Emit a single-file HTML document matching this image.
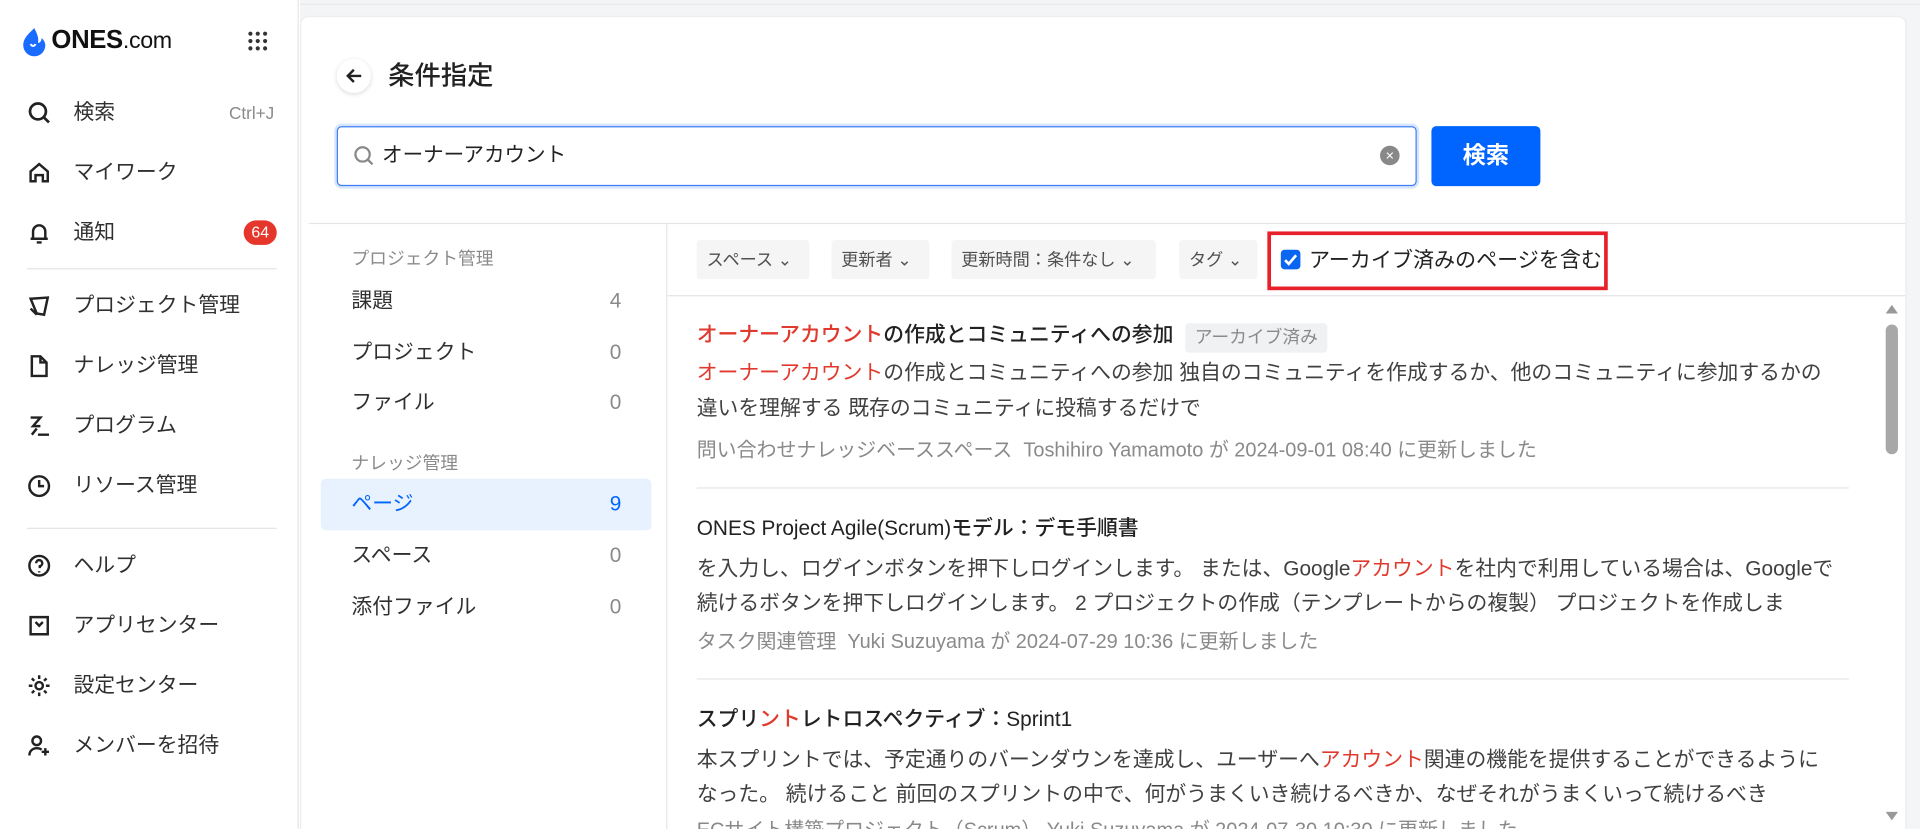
<!DOCTYPE html>
<html><head><meta charset="utf-8"><style>
*{box-sizing:border-box;margin:0;padding:0}
html,body{width:1920px;height:829px;overflow:hidden;background:#fff}
#w{width:1568px;height:677px;overflow:hidden;transform:scale(1.22449);transform-origin:0 0;position:relative;font-family:"Liberation Sans","Noto Sans CJK JP",sans-serif;color:#303030}
.a{position:absolute;white-space:nowrap;line-height:20px}
.side{left:0;top:0;width:244px;height:677px;border-right:1px solid #e6e6e6;background:#fff}
.nav{position:absolute;left:22px;font-size:17px;line-height:20px;white-space:nowrap;width:204px;height:20px}
.nav svg{position:absolute;left:0;top:0}
.nav span{position:absolute;left:38px;top:0;white-space:nowrap}
.hr{position:absolute;height:1px;background:#e5e5e5}
.main{left:245px;top:0;width:1323px;height:677px;background:#f4f5f6}
.card{left:246px;top:14px;width:1310px;height:670px;background:#fff;border-radius:6px 6px 0 0;box-shadow:0 0 2px rgba(0,0,0,.08)}
.lp{font-size:17px;color:#303030}
.cnt{color:#8a8a8a}
.chip{top:196px;height:32px;background:#f5f5f5;border-radius:3px;font-size:14px;line-height:32px;padding-left:8px;color:#505050}
.t{font-size:17px;color:#222;font-weight:500}
.b{font-size:17px;color:#404040}
.m{font-size:16.3px;color:#8a8a8a}
.r{color:#e03a2e}
.dv{position:absolute;left:569px;width:941px;height:1px;background:#e6e6e6}
</style></head><body><div id="w">
<div class="a main"></div>
<div class="a" style="left:245px;top:3px;width:1323px;height:1px;background:#e8e8e8"></div>
<div class="a side"></div>
<svg class="a" style="left:16px;top:22px" width="24" height="24" viewBox="0 0 24 24"><path d="M12 1C8 5 3 9 3 15a9 9 0 0 0 18 0c0-3-2-5-3-6 0 3-2 4-3 4 1-4-1-8-3-12z" fill="#1a6bff"/><path d="M9 14c1 2 3 2 4 0" stroke="#fff" stroke-width="1.6" fill="none"/></svg>
<div class="a" style="left:42px;top:23px;font-size:21px;font-weight:bold;color:#111;letter-spacing:-0.3px">ONES<span style="font-weight:normal;font-size:19px">.com</span></div>
<svg class="a" style="left:202px;top:25px" width="17" height="17"><g fill="#333"><circle cx="2.5" cy="2.5" r="1.7"/><circle cx="8.5" cy="2.5" r="1.7"/><circle cx="14.5" cy="2.5" r="1.7"/><circle cx="2.5" cy="8.5" r="1.7"/><circle cx="8.5" cy="8.5" r="1.7"/><circle cx="14.5" cy="8.5" r="1.7"/><circle cx="2.5" cy="14.5" r="1.7"/><circle cx="8.5" cy="14.5" r="1.7"/><circle cx="14.5" cy="14.5" r="1.7"/></g></svg>
<div class="nav" style="top:82px"><svg width="20" height="20" viewBox="0 0 20 20" fill="none" stroke="#222" stroke-width="2.2"><circle cx="9" cy="9" r="6.5"/><path d="M14 14l4 4"/></svg><span>検索</span><span style="left:165px;font-size:14px;color:#8a8a8a">Ctrl+J</span></div>
<div class="nav" style="top:131px"><svg width="20" height="20" viewBox="0 0 20 20" fill="none" stroke="#222" stroke-width="2"><path d="M3 9l7-6 7 6v8h-4v-5H7v5H3z"/></svg><span>マイワーク</span></div>
<div class="nav" style="top:180px"><svg width="20" height="20" viewBox="0 0 20 20" fill="none" stroke="#222" stroke-width="2"><path d="M5 14V9a5 5 0 0 1 10 0v5M3 15h14M8 18h4"/></svg><span>通知</span></div>
<div class="a" style="left:199px;top:180px;width:27px;height:20px;border-radius:10px;background:#e6362b;color:#fff;font-size:13px;line-height:20px;text-align:center">64</div>
<div class="hr" style="left:22px;top:219px;width:204px"></div>
<div class="nav" style="top:240px"><svg width="20" height="20" viewBox="0 0 20 20" fill="none" stroke="#222" stroke-width="2"><path d="M3 4l14-1-3 14-6-1zM3 12l5 5"/></svg><span>プロジェクト管理</span></div>
<div class="nav" style="top:289px"><svg width="20" height="20" viewBox="0 0 20 20" fill="none" stroke="#222" stroke-width="2"><path d="M4 2h7l5 5v11H4zM11 2v5h5"/></svg><span>ナレッジ管理</span></div>
<div class="nav" style="top:338px"><svg width="20" height="20" viewBox="0 0 20 20" fill="none" stroke="#222" stroke-width="2"><path d="M3 3h8l-6 7h6M9 17h9M4 17l4-5"/></svg><span>プログラム</span></div>
<div class="nav" style="top:387px"><svg width="20" height="20" viewBox="0 0 20 20" fill="none" stroke="#222" stroke-width="2"><circle cx="10" cy="10" r="8"/><path d="M10 5v5h4"/></svg><span>リソース管理</span></div>
<div class="hr" style="left:22px;top:431px;width:204px"></div>
<div class="nav" style="top:452px"><svg width="20" height="20" viewBox="0 0 20 20" fill="none" stroke="#222" stroke-width="2"><circle cx="10" cy="10" r="8"/><path d="M7.5 8a2.5 2.5 0 1 1 3 2.4V12M10 14.5v1"/></svg><span>ヘルプ</span></div>
<div class="nav" style="top:501px"><svg width="20" height="20" viewBox="0 0 20 20" fill="none" stroke="#222" stroke-width="2"><path d="M3 3h14v14H3zM7 7l3 3 3-3"/></svg><span>アプリセンター</span></div>
<div class="nav" style="top:550px"><svg width="20" height="20" viewBox="0 0 20 20" fill="none" stroke="#222" stroke-width="2"><circle cx="10" cy="10" r="3"/><path d="M10 1.5v3M10 15.5v3M1.5 10h3M15.5 10h3M4 4l2 2M14 14l2 2M4 16l2-2M14 6l2-2"/></svg><span>設定センター</span></div>
<div class="nav" style="top:599px"><svg width="20" height="20" viewBox="0 0 20 20" fill="none" stroke="#222" stroke-width="2"><circle cx="8" cy="6" r="3.5"/><path d="M2 18c0-4 3-6 6-6 1.5 0 3 .5 4 1.2M15 12v6M12 15h6"/></svg><span>メンバーを招待</span></div>

<div class="a card"></div>
<div class="a" style="left:275px;top:48px;width:28px;height:28px;border-radius:50%;background:#fff;box-shadow:0 1px 4px rgba(0,0,0,.15)"></div>
<svg class="a" style="left:281px;top:54px" width="16" height="16" viewBox="0 0 16 16" fill="none" stroke="#222" stroke-width="2"><path d="M14 8H3M8 3L3 8l5 5"/></svg>
<div class="a" style="left:317px;top:50px;font-size:21.5px;line-height:24px;color:#222;font-weight:500">条件指定</div>
<div class="a" style="left:275px;top:103px;width:882px;height:49px;border:1px solid #3d7ef5;border-radius:4px;box-shadow:0 0 0 2px #d6e4fd"></div>
<svg class="a" style="left:288px;top:118px" width="18" height="18" viewBox="0 0 20 20" fill="none" stroke="#888" stroke-width="2"><circle cx="9" cy="9" r="6.5"/><path d="M14 14l4 4"/></svg>
<div class="a" style="left:312px;top:117px;font-size:16.8px;color:#222">オーナーアカウント</div>
<div class="a" style="left:1127px;top:119px;width:16px;height:16px;border-radius:50%;background:#888;color:#fff;font-size:12px;line-height:16px;text-align:center">×</div>
<div class="a" style="left:1169px;top:103px;width:89px;height:49px;border-radius:4px;background:#0064ff;color:#fff;font-size:19px;font-weight:bold;line-height:49px;text-align:center">検索</div>
<div class="a" style="left:252px;top:182px;width:1304px;height:1px;background:#e6e6e6"></div>
<div class="a" style="left:544px;top:183px;width:1px;height:494px;background:#e6e6e6"></div>
<div class="a" style="left:287px;top:202px;font-size:14.5px;color:#8a8a8a">プロジェクト管理</div>
<div class="a lp" style="left:287px;top:236px">課題</div><div class="a lp cnt" style="left:498px;top:236px">4</div>
<div class="a lp" style="left:287px;top:278px">プロジェクト</div><div class="a lp cnt" style="left:498px;top:278px">0</div>
<div class="a lp" style="left:287px;top:319px">ファイル</div><div class="a lp cnt" style="left:498px;top:319px">0</div>
<div class="a" style="left:287px;top:369px;font-size:14.5px;color:#8a8a8a">ナレッジ管理</div>
<div class="a" style="left:262px;top:391px;width:270px;height:42px;border-radius:4px;background:#e8f1fe"></div>
<div class="a lp" style="left:287px;top:402px;color:#0064ff">ページ</div><div class="a lp" style="left:498px;top:402px;color:#0064ff">9</div>
<div class="a lp" style="left:287px;top:444px">スペース</div><div class="a lp cnt" style="left:498px;top:444px">0</div>
<div class="a lp" style="left:287px;top:486px">添付ファイル</div><div class="a lp cnt" style="left:498px;top:486px">0</div>

<div class="a chip" style="left:569px;width:92px">スペース ⌄</div>
<div class="a chip" style="left:679px;width:80px">更新者 ⌄</div>
<div class="a chip" style="left:777px;width:167px">更新時間：条件なし ⌄</div>
<div class="a chip" style="left:963px;width:64px">タグ ⌄</div>
<div class="a" style="left:1035px;top:189px;width:278px;height:48px;border:3px solid #e8202a"></div>
<div class="a" style="left:1046px;top:204px;width:16px;height:16px;border-radius:3px;background:#0a66f0"></div>
<svg class="a" style="left:1046px;top:204px" width="16" height="16" fill="none" stroke="#fff" stroke-width="2.2"><path d="M3.5 8.5l3 3 6-7"/></svg>
<div class="a" style="left:1069px;top:202px;font-size:17.2px;color:#222">アーカイブ済みのページを含む</div>
<div class="a" style="left:545px;top:241px;width:1011px;height:1px;background:#e6e6e6"></div>

<div class="a t" style="left:569px;top:264px"><span class="r">オーナーアカウント</span>の作成とコミュニティへの参加</div>
<div class="a" style="left:968px;top:264px;width:116px;height:24px;background:#f0f1f2;border-radius:3px;font-size:14.5px;color:#8a8a8a;line-height:24px;text-align:center">アーカイブ済み</div>
<div class="a b" style="left:569px;top:295px"><span class="r">オーナーアカウント</span>の作成とコミュニティへの参加 独自のコミュニティを作成するか、他のコミュニティに参加するかの</div>
<div class="a b" style="left:569px;top:324px">違いを理解する 既存のコミュニティに投稿するだけで</div>
<div class="a m" style="left:569px;top:358px">問い合わせナレッジベーススペース &nbsp;Toshihiro Yamamoto が 2024-09-01 08:40 に更新しました</div>
<div class="dv" style="top:398px"></div>
<div class="a t" style="left:569px;top:422px">ONES Project Agile(Scrum)モデル：デモ手順書</div>
<div class="a b" style="left:569px;top:455px">を入力し、ログインボタンを押下しログインします。 または、Google<span class="r">アカウント</span>を社内で利用している場合は、Googleで</div>
<div class="a b" style="left:569px;top:483px">続けるボタンを押下しログインします。 2 プロジェクトの作成（テンプレートからの複製） プロジェクトを作成しま</div>
<div class="a m" style="left:569px;top:514px">タスク関連管理 &nbsp;Yuki Suzuyama が 2024-07-29 10:36 に更新しました</div>
<div class="dv" style="top:554px"></div>
<div class="a t" style="left:569px;top:578px">スプリ<span class="r">ント</span>レトロスペクティブ：Sprint1</div>
<div class="a b" style="left:569px;top:611px">本スプリントでは、予定通りのバーンダウンを達成し、ユーザーへ<span class="r">アカウント</span>関連の機能を提供することができるように</div>
<div class="a b" style="left:569px;top:639px">なった。 続けること 前回のスプリントの中で、何がうまくいき続けるべきか、なぜそれがうまくいって続けるべき</div>
<div class="a m" style="left:569px;top:668px">ECサイト構築プロジェクト（Scrum） Yuki Suzuyama が 2024-07-30 10:30 に更新しました</div>
<svg class="a" style="left:1539px;top:247px" width="12" height="10"><path d="M1 9L6 2l5 7z" fill="#999"/></svg>
<div class="a" style="left:1540px;top:265px;width:10px;height:106px;border-radius:5px;background:#a8a8a8"></div>
<svg class="a" style="left:1539px;top:662px" width="12" height="10"><path d="M1 1l5 7 5-7z" fill="#999"/></svg>
</div></body></html>
